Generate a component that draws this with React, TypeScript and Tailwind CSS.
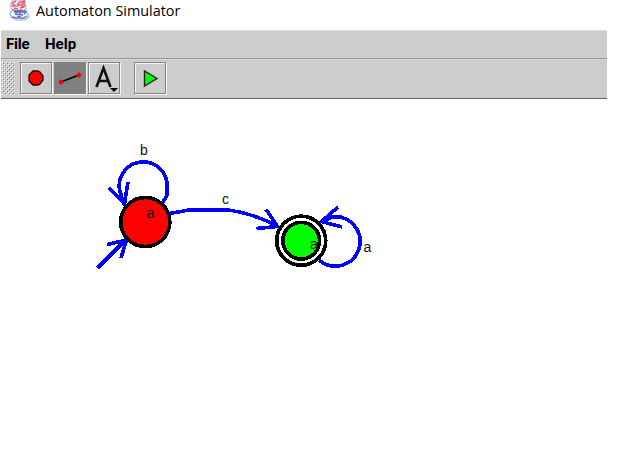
import type { ReactNode } from "react";

function JavaIcon() {
  return (
    <svg width="22" height="22" viewBox="0 0 22 22" fill="none" className="shrink-0">
      <path d="M4 0 2 3v5l2 2-3 3 1 4 5 3h9l4-3-1-3-2-2V8l-1-3V0z" fill="#eef2fc" stroke="#9db6ee" strokeWidth="1.2" />
      <path d="M4 7V3l3-2M4 5l3 1M8 7l1-3 3-3M9 5h3M13 7V2l2-1v6M5 8l4 1M11 8l4-1" stroke="#f05560" strokeWidth="1.5" />
      <path d="M4 10l4 1 4-1 4 2M5 12h10M6 14l8 1M3 17l5 1h7l3-2M15 10l2 2-2 2" stroke="#6874b4" strokeWidth="1.5" />
      <path d="M7 11v3M11 11v4M8 16l4 1" stroke="#4c5798" />
    </svg>
  );
}

function ToolButton({ children, active = false, label }: { children: ReactNode; active?: boolean; label: string }) {
  return (
    <button
      aria-label={label}
      className={`h-8 w-8 shrink-0 border border-[#858585] p-0 shadow-[1px_1px_0_#f4f4f4] ${
        active ? "bg-[#808080]" : "bg-[#cccccc] inset-shadow-[1px_1px_0_#f4f4f4]"
      }`}
    >
      <svg width="30" height="30" viewBox="0 0 30 30" fill="none">
        {children}
      </svg>
    </button>
  );
}

function Grip() {
  return (
    <svg width="13" height="33" className="mr-[5px] shrink-0" shapeRendering="crispEdges">
      <defs>
        <pattern id="bumps" width="4" height="4" patternUnits="userSpaceOnUse">
          <path d="M0 0h1v1H0zM2 2h1v1H2z" fill="#ffffff" />
          <path d="M1 1h1v1H1zM3 3h1v1H3z" fill="#808080" />
        </pattern>
      </defs>
      <rect width="13" height="33" fill="url(#bumps)" />
    </svg>
  );
}

function Diagram() {
  return (
    <svg width="627" height="351" viewBox="0 99 627 351" className="block">
      <g fill="none" stroke="#0000ff" strokeWidth="3.6" shapeRendering="crispEdges">
        <path d="M162 204L167 195V182A24 24 0 1 0 119.500 190L124 204" />
        <path d="M109 188L124.500 204L128 182" />
        <path d="M97.500 268L126 239.500M107 244.500L126.500 240L121 258" />
        <path d="M169 213.500L191 209.700H226C246 212 260 217 277 226" />
        <path d="M266 209.500L277.500 226.500L256.500 228.500" />
        <path d="M321.500 222L332 217A24.700 24.700 0 1 1 319 260" />
        <path d="M338 207L321.500 221.500L342 227" />
      </g>
      <g stroke="#000" strokeWidth="3.700" shapeRendering="crispEdges">
        <circle cx="145.300" cy="222" r="24.500" fill="#ff0000" />
        <circle cx="301.200" cy="240.700" r="24.500" fill="#fff" />
        <circle cx="301.200" cy="240.700" r="18.300" fill="#00ff00" />
      </g>
      <g fill="#111" className="font-['Liberation_Sans',Arial,sans-serif] text-[14px]">
        <text x="140" y="155">b</text>
        <text x="146.500" y="217.500">a</text>
        <text x="222" y="204">c</text>
        <text x="310" y="249">a</text>
        <text x="363.500" y="252">a</text>
      </g>
    </svg>
  );
}

export default function App() {
  return (
    <div className="h-[450px] w-[627px] overflow-hidden bg-white font-['Liberation_Sans',Arial,sans-serif] text-black">
      <header className="flex h-[30px] items-start gap-[5px] pl-[9px]">
        <JavaIcon />
        <h1 className="font-['Open_Sans','Noto_Sans',sans-serif] text-[14.4px] leading-[22px] whitespace-nowrap">Automaton Simulator</h1>
      </header>
      <div className="ml-px w-[606px]">
        <nav className="flex h-[29px] items-center gap-[15px] border-t border-b border-t-[#dedede] border-b-[#999999] bg-[#cccccc] pl-[5px] font-['Roboto',sans-serif] text-[15px] font-bold">
          <span className="w-6 tracking-[-0.2px]">File</span>
          <span>Help</span>
        </nav>
        <div className="flex h-10 items-start border-t border-b border-t-[#d8d8d8] border-b-[#686868] bg-[#cccccc] pt-[2px] pl-px">
          <Grip />
          <div className="flex gap-[2px]">
            <ToolButton label="State">
              <path d="M12 8h5l2 1 3 4v4l-3 4-2 1h-5l-4-4v-6z" fill="#f00" stroke="#111" strokeWidth="1.300" />
            </ToolButton>
            <ToolButton label="Transition" active>
              <path d="M6 19L24 12" stroke="#000" strokeWidth="1.500" />
              <path d="M6 16l3 3-3 3-3-3zM24 9l3 3-3 3-3-3z" fill="#f00" />
            </ToolButton>
            <ToolButton label="Label">
              <path d="M7.500 24L14.500 5 21.500 24M10 18h9" stroke="#111" strokeWidth="2.600" />
              <path d="M21 25h8l-4 4z" fill="#000" />
            </ToolButton>
          </div>
          <div className="ml-[14px] flex">
            <ToolButton label="Run">
              <path d="M9.500 8v15L22 15.500z" fill="#0f0" stroke="#222" strokeWidth="1.400" />
            </ToolButton>
          </div>
        </div>
      </div>
      <Diagram />
    </div>
  );
}
